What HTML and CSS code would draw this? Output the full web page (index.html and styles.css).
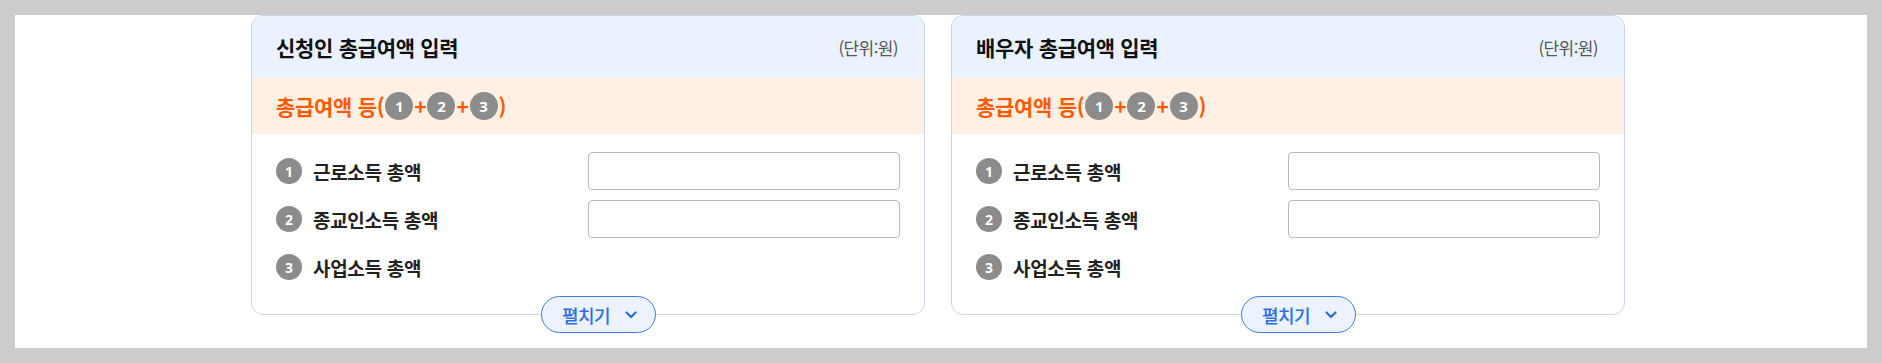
FILE: index.html
```html
<!DOCTYPE html>
<html lang="ko">
<head>
<meta charset="utf-8">
<title>총급여액 입력</title>
<link rel="stylesheet" href="styles.css">
</head>
<body>
<div class="page">
  <div class="cards">
    <section class="card">
      <div class="card-head">
        <h2 class="card-title">신청인 총급여액 입력</h2>
        <span class="unit">(단위:원)</span>
      </div>
      <div class="formula">총급여액 등(<span class="num num-sm">1</span>+<span class="num num-sm">2</span>+<span class="num num-sm">3</span>)</div>
      <div class="rows">
        <div class="label"><span class="num">1</span>근로소득 총액</div>
        <input class="field" type="text">
        <div class="label"><span class="num">2</span>종교인소득 총액</div>
        <input class="field" type="text">
        <div class="label"><span class="num">3</span>사업소득 총액</div>
      </div>
      <button class="toggle" type="button">펼치기<svg class="chev" width="12" height="8" viewBox="0 0 12 8"><path d="M1.5 1.5 L6 6 L10.5 1.5" fill="none" stroke="#2b6de3" stroke-width="2.2" stroke-linecap="round" stroke-linejoin="round"/></svg></button>
    </section>
    <section class="card">
      <div class="card-head">
        <h2 class="card-title">배우자 총급여액 입력</h2>
        <span class="unit">(단위:원)</span>
      </div>
      <div class="formula">총급여액 등(<span class="num num-sm">1</span>+<span class="num num-sm">2</span>+<span class="num num-sm">3</span>)</div>
      <div class="rows">
        <div class="label"><span class="num">1</span>근로소득 총액</div>
        <input class="field" type="text">
        <div class="label"><span class="num">2</span>종교인소득 총액</div>
        <input class="field" type="text">
        <div class="label"><span class="num">3</span>사업소득 총액</div>
      </div>
      <button class="toggle" type="button">펼치기<svg class="chev" width="12" height="8" viewBox="0 0 12 8"><path d="M1.5 1.5 L6 6 L10.5 1.5" fill="none" stroke="#2b6de3" stroke-width="2.2" stroke-linecap="round" stroke-linejoin="round"/></svg></button>
    </section>
  </div>
</div>
</body>
</html>
```

FILE: styles.css
```css
* { box-sizing: border-box; }

body {
  margin: 0;
  padding: 15px;
  background: #cccccc;
  font-family: "Noto Sans CJK KR", "Noto Sans", sans-serif;
}

.page {
  background: #ffffff;
  height: 333px;
  padding-left: 236px;
}

.cards {
  display: flex;
  gap: 26px;
}

.card {
  position: relative;
  width: 674px;
  height: 300px;
  border: 1px solid #c6d6ef;
  border-radius: 12px;
  background: #ffffff;
}

.card-head {
  height: 62px;
  display: flex;
  align-items: center;
  justify-content: space-between;
  padding: 0 26px 0 24px;
  background: #ebf2ff;
  border-radius: 11px 11px 0 0;
}

.card-title {
  margin: 0;
  font-size: 21px;
  font-weight: 700;
  letter-spacing: -0.3px;
  color: #111111;
}

.unit {
  font-size: 17px;
  letter-spacing: -0.6px;
  color: #555555;
}

.formula {
  height: 56px;
  display: flex;
  align-items: center;
  padding: 0 24px;
  background: #fff0e5;
  color: #ff5a00;
  font-size: 21px;
  font-weight: 700;
  letter-spacing: -0.3px;
}

.num {
  display: inline-flex;
  align-items: center;
  justify-content: center;
  width: 26px;
  height: 26px;
  border-radius: 50%;
  background: #8c8c8c;
  color: #ffffff;
  font-family: "Noto Sans", sans-serif;
  font-size: 14px;
  font-weight: 700;
  letter-spacing: 0;
  margin-right: 11px;
  flex: none;
}

.num-sm {
  width: 28px;
  height: 28px;
  font-size: 15px;
  margin: 0 1px;
}

.rows {
  display: grid;
  grid-template-columns: 1fr 1fr;
  grid-auto-rows: 38px;
  row-gap: 10px;
  padding: 18px 24px 0;
}

.label {
  display: flex;
  align-items: center;
  font-size: 19px;
  font-weight: 700;
  letter-spacing: -0.3px;
  color: #222222;
}

.field {
  width: 100%;
  height: 38px;
  margin: 0;
  border: 1px solid #bbbbbb;
  border-radius: 4px;
  background: #ffffff;
  font-family: inherit;
  font-size: 16px;
}

.toggle {
  position: absolute;
  top: 280px;
  left: 50%;
  margin-left: -47px;
  width: 115px;
  height: 37px;
  display: flex;
  align-items: center;
  justify-content: center;
  gap: 15px;
  padding: 0 0 0 2px;
  border: 1px solid #3a7be8;
  border-radius: 19px;
  background: #ecf3ff;
  color: #2b6de3;
  font-family: "Noto Sans CJK KR", sans-serif;
  font-size: 18px;
  font-weight: 500;
  letter-spacing: -0.5px;
  cursor: pointer;
}

.chev { display: block; }
```
